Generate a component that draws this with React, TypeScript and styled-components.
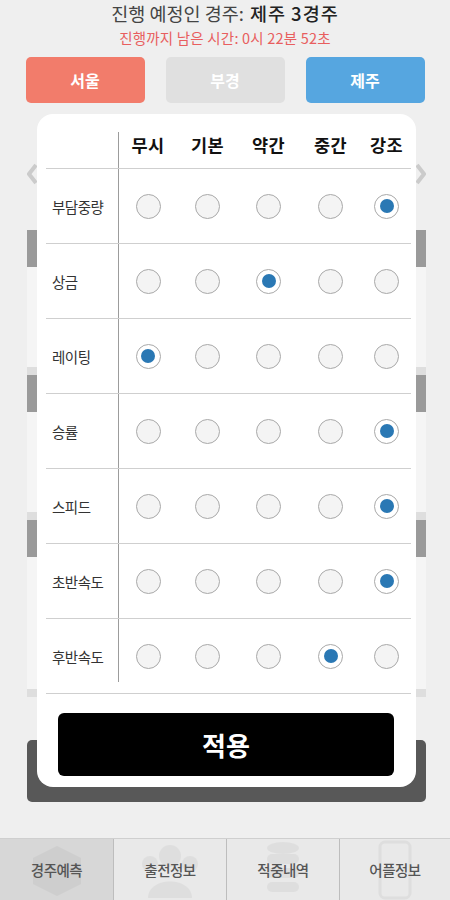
import styled, { createGlobalStyle } from 'styled-components';

const GlobalStyle = createGlobalStyle`
	html, body {
		margin: 0;
		padding: 0;
		background: #efefef;
	}
	* {
		box-sizing: border-box;
	}
	body {
		font-family: 'Noto Sans CJK KR', 'Noto Sans', sans-serif;
	}
`;

const Page = styled.div`
	display: flex;
	flex-direction: column;
	width: 450px;
	height: 900px;
	background: #efefef;
	overflow: hidden;
`;

const Header = styled.div`
	display: flex;
	flex-direction: column;
	align-items: center;
`;

const Title = styled.div`
	display: flex;
	align-items: baseline;
	gap: 6px;
	font-size: 18.5px;
	line-height: 27px;
	color: #444;
	letter-spacing: 0;
`;

const TitleStrong = styled.span`
	color: #222;
	font-weight: 500;
	letter-spacing: 1px;
`;

const Remain = styled.div`
	font-size: 14.5px;
	line-height: 21px;
	color: #e85e5e;
	letter-spacing: 0.2px;
`;

const RegionRow = styled.div`
	display: grid;
	grid-template-columns: repeat(3, 119px);
	justify-content: center;
	gap: 21px;
	margin-top: 9px;
`;

const RegionButton = styled.div<{ $color: string }>`
	display: flex;
	align-items: center;
	justify-content: center;
	height: 46px;
	border-radius: 5px;
	background: ${(p) => p.$color};
	color: #fff;
	font-size: 16px;
	font-weight: 700;
`;

const Content = styled.div`
	position: relative;
	flex: 1;
`;

const Behind = styled.div`
	display: flex;
	flex-direction: column;
	padding: 60px 24px 0 27px;
`;

const NavRow = styled.div`
	display: flex;
	justify-content: space-between;
	height: 22px;
	margin-bottom: 45px;
`;

const Card = styled.div<{ $body: number }>`
	display: flex;
	flex-direction: column;

	&::before {
		content: '';
		height: 37px;
		background: #9a9a9a;
	}
	&::after {
		content: '';
		height: ${(p) => p.$body}px;
		background: #f5f5f5;
		border-bottom: 8px solid #dedede;
	}
`;

const DarkButton = styled.div`
	height: 62px;
	margin-top: 43px;
	border-radius: 5px;
	background: #585858;
`;

const Modal = styled.div`
	position: absolute;
	top: 11px;
	left: 37px;
	right: 34px;
	background: #fff;
	border-radius: 16px;
	padding: 18px 5px 11px 9px;
`;

const TableRow = styled.div<{ $head?: boolean }>`
	display: grid;
	grid-template-columns: 73px 58px 61px 61px 63px 49px;
	height: ${(p) => (p.$head ? 37 : 75)}px;
	border-bottom: 1px solid #cfcfcf;
`;

const LabelCell = styled.div<{ $short?: boolean }>`
	display: flex;
	align-items: center;
	padding-left: 6px;
	border-right: 1px solid #9c9c9c;
	font-size: 14.5px;
	color: #333;
	letter-spacing: -0.5px;
	height: ${(p) => (p.$short ? '63px' : 'auto')};
	padding-top: ${(p) => (p.$short ? '12px' : '0')};
`;

const HeadCell = styled.div`
	display: flex;
	justify-content: center;
	padding-top: 1px;
	font-size: 17.5px;
	line-height: 24px;
	font-weight: 700;
	color: #111;
	letter-spacing: 0.5px;
`;

const RadioCell = styled.div`
	display: flex;
	align-items: center;
	justify-content: center;
`;

const Radio = styled.div<{ $on: boolean }>`
	display: flex;
	align-items: center;
	justify-content: center;
	width: 25px;
	height: 25px;
	border-radius: 50%;
	border: 1px solid #a9a9a9;
	background: ${(p) => (p.$on ? '#fff' : '#f4f4f4')};

	&::after {
		content: '';
		display: ${(p) => (p.$on ? 'block' : 'none')};
		width: 14px;
		height: 14px;
		border-radius: 50%;
		background: #2a78b4;
	}
`;

const ApplyButton = styled.div`
	display: flex;
	align-items: center;
	justify-content: center;
	height: 63px;
	margin: 19px 17px 0 12px;
	border-radius: 6px;
	background: #000;
	color: #fff;
	font-size: 26px;
	font-weight: 700;
`;

const TabBar = styled.div`
	display: grid;
	grid-template-columns: 113px 113px 113px 111px;
	height: 62px;
	border-top: 1px solid #cfcfcf;
`;

const Tab = styled.div<{ $active?: boolean; $first?: boolean }>`
	position: relative;
	display: flex;
	align-items: center;
	justify-content: center;
	background: ${(p) => (p.$active ? '#d7d7d7' : '#e9e9e9')};
	border-left: ${(p) => (p.$first ? 'none' : '1px solid #bdbdbd')};
	font-size: 14.5px;
	font-weight: 500;
	color: #555;
	letter-spacing: -0.5px;

	svg {
		position: absolute;
		left: 50%;
		top: 50%;
		transform: translate(-50%, -50%);
	}
	span {
		position: relative;
	}
`;

const Chevron = ({ left }: { left?: boolean }) => (
	<svg width="11" height="22" viewBox="0 0 11 22">
		<polyline
			points={left ? '9,2 2,11 9,20' : '2,2 9,11 2,20'}
			fill="none"
			stroke="#cbcbcb"
			strokeWidth="4"
		/>
	</svg>
);

const heads = ['무시', '기본', '약간', '중간', '강조'];

const rows: [string, number][] = [
	['부담중량', 4],
	['상금', 2],
	['레이팅', 0],
	['승률', 4],
	['스피드', 4],
	['초반속도', 4],
	['후반속도', 3],
];

// 탭 배경에 희미하게 깔린 아이콘
const icons = [
	<svg key="a" width="56" height="56" viewBox="0 0 56 56" fill="#000" opacity="0.035">
		<polygon points="28,4 52,16 52,42 28,54 4,42 4,16" />
	</svg>,
	<svg key="b" width="64" height="56" viewBox="0 0 64 56" fill="#000" opacity="0.04">
		<circle cx="32" cy="14" r="11" />
		<path d="M10 56 C10 34 54 34 54 56 Z" />
		<circle cx="12" cy="22" r="8" />
		<circle cx="52" cy="22" r="8" />
	</svg>,
	<svg key="c" width="40" height="60" viewBox="0 0 40 60" fill="#000" opacity="0.04">
		<ellipse cx="20" cy="8" rx="16" ry="6" />
		<rect x="4" y="14" width="32" height="10" rx="5" />
		<rect x="4" y="28" width="32" height="10" rx="5" />
		<rect x="4" y="42" width="32" height="10" rx="5" />
	</svg>,
	<svg key="d" width="34" height="60" viewBox="0 0 34 60" fill="none" stroke="#000" strokeWidth="3" opacity="0.04">
		<rect x="2" y="2" width="30" height="56" rx="5" />
	</svg>,
];

const tabs = ['경주예측', '출전정보', '적중내역', '어플정보'];

export default function App() {
	return (
		<Page>
			<GlobalStyle />
			<Header>
				<Title>
					<span>진행 예정인 경주:</span>
					<TitleStrong>제주 3경주</TitleStrong>
				</Title>
				<Remain>진행까지 남은 시간: 0시 22분 52초</Remain>
			</Header>

			<RegionRow>
				<RegionButton $color="#f27c6b">서울</RegionButton>
				<RegionButton $color="#e0e0e0">부경</RegionButton>
				<RegionButton $color="#56a6e0">제주</RegionButton>
			</RegionRow>

			<Content>
				<Behind>
					<NavRow>
						<Chevron left />
						<Chevron />
					</NavRow>
					<Card $body={100} />
					<Card $body={100} />
					<Card $body={132} />
					<DarkButton />
				</Behind>

				<Modal>
					<TableRow $head>
						<LabelCell />
						{heads.map((h) => (
							<HeadCell key={h}>{h}</HeadCell>
						))}
					</TableRow>
					{rows.map(([label, sel], i) => (
						<TableRow key={label}>
							<LabelCell $short={i === rows.length - 1}>{label}</LabelCell>
							{heads.map((h, j) => (
								<RadioCell key={h}>
									<Radio $on={j === sel} />
								</RadioCell>
							))}
						</TableRow>
					))}
					<ApplyButton>적용</ApplyButton>
				</Modal>
			</Content>

			<TabBar>
				{tabs.map((t, i) => (
					<Tab key={t} $active={i === 0} $first={i === 0}>
						{icons[i]}
						<span>{t}</span>
					</Tab>
				))}
			</TabBar>
		</Page>
	);
}
